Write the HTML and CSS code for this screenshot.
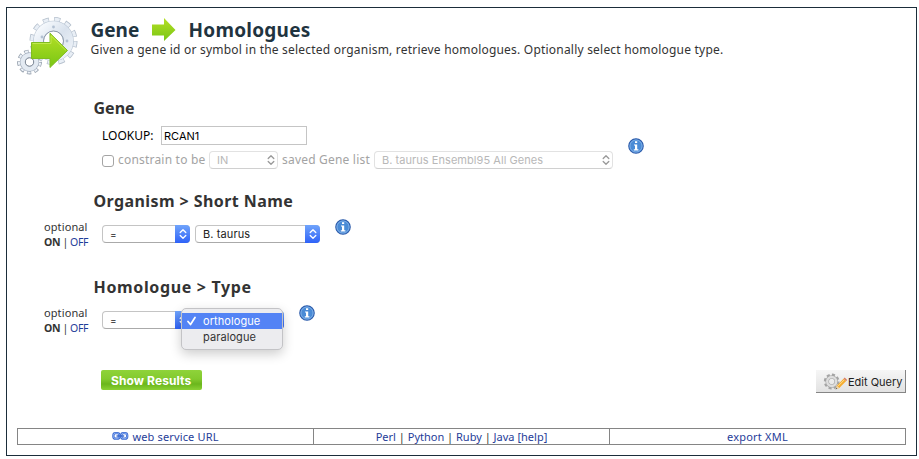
FILE: index.html
```
<!DOCTYPE html>
<html lang="en">
<head>
<meta charset="utf-8">
<title>Gene Homologues</title>
<link rel="stylesheet" href="styles.css">
</head>
<body>
<svg class="defs" width="0" height="0">
  <defs>
    <linearGradient id="green" x1="0" y1="0" x2="0" y2="1"><stop offset="0" stop-color="#b5df25"/><stop offset="1" stop-color="#78c614"/></linearGradient>
    <linearGradient id="steel" x1="0" y1="0" x2="1" y2="1"><stop offset="0" stop-color="#f8fbfe"/><stop offset=".5" stop-color="#d9e2ed"/><stop offset="1" stop-color="#eef3f9"/></linearGradient>
    <symbol id="info" viewBox="0 0 16 16">
      <circle cx="8" cy="8" r="7.2" fill="#4a8bd6" stroke="#2c5bab" stroke-width="1.2"/>
      <circle cx="8" cy="8" r="6.1" fill="none" stroke="#8dbaec" stroke-width=".8"/>
      <path d="M7 3.2h2.2v1.9H7zM6 6.5h3.2v4.8h1.2v1.2H5.8v-1.2H7V7.6H6z" fill="#fff"/>
    </symbol>
    <symbol id="chevrons" viewBox="0 0 8 12">
      <path d="M1.2 4.5 4 1.7l2.8 2.8M1.2 7.5 4 10.3l2.8-2.8" fill="none" stroke="currentColor" stroke-width="1.3" stroke-linecap="round" stroke-linejoin="round"/>
    </symbol>
  </defs>
</svg>
<main class="frame">
  <header class="header">
    <svg class="logo" width="62" height="60" viewBox="0 0 62 60">
      <g fill="none">
        <circle cx="36.500" cy="24" r="21.5" stroke="#b4bfcc" stroke-width="5" stroke-dasharray="6.1 5.16"/>
        <circle cx="36.500" cy="24" r="21.5" stroke="#e9eff6" stroke-width="3.4" stroke-dasharray="4.9 6.36" stroke-dashoffset="-.6"/>
        <circle cx="36.500" cy="24" r="15" stroke="#b9c5d3" stroke-width="10.600"/>
        <circle cx="36.500" cy="24" r="15" stroke="url(#steel)" stroke-width="9.400"/>
        <circle cx="36.500" cy="24" r="10" stroke="#8d9aaa" stroke-width="1"/>
        <circle cx="12.500" cy="45" r="10.7" stroke="#929daa" stroke-width="3.4" stroke-dasharray="4.3 3.17"/>
        <circle cx="12.500" cy="45" r="10.5" stroke="#edf2f8" stroke-width="2.2" stroke-dasharray="3.1 4.23" stroke-dashoffset="-.6"/>
        <circle cx="12.500" cy="45" r="6.8" stroke="#a5b0bf" stroke-width="5.8"/>
        <circle cx="12.500" cy="45" r="6.8" stroke="#e3eaf2" stroke-width="4.6"/>
        <circle cx="12.500" cy="45" r="4.2" stroke="#7f8996" stroke-width="1"/>
      </g>
      <g fill="#b3c1d3"><circle cx="36.500" cy="10" r="1.4"/><circle cx="50" cy="24" r="1.4"/><circle cx="25" cy="20" r="1.4"/></g>
      <path d="M14.500 25.500H33V16.200L50.500 33.500 33 50.500V41.500H14.500z" fill="url(#green)" stroke="#80bd20"/>
      <path d="M15.500 26.500H34V18.700L49 33.500" fill="none" stroke="#c8ec58" stroke-width=".8"/>
    </svg>
    <div class="heading">
      <h1 class="title"><span class="t-gene">Gene</span>
        <svg class="arrow" width="24" height="24" viewBox="0 0 24 24"><path d="M0 6.500H12V0L23.500 12 12 23V17.500H0z" fill="url(#green)"/></svg>
        <span class="t-homologues">Homologues</span></h1>
      <p class="description">Given a gene id or symbol in the selected organism, retrieve homologues. Optionally select homologue type.</p>
    </div>
  </header>

  <section class="block gene">
    <h2 class="s-gene">Gene</h2>
    <div class="gene-row">
      <div class="gene-fields">
        <div class="lookup"><span class="lookup-label">LOOKUP:</span><div class="input">RCAN1</div></div>
        <div class="constrain">
          <span class="checkbox"></span><span class="constrain-label">constrain to be</span>
          <div class="select disabled sel-in"><span>IN</span><i><svg width="8" height="12"><use href="#chevrons"/></svg></i></div>
          <span class="saved-label">saved Gene list</span>
          <div class="select disabled sel-list"><span>B. taurus Ensembl95 All Genes</span><i><svg width="8" height="12"><use href="#chevrons"/></svg></i></div>
        </div>
      </div>
      <svg class="info" width="16" height="16"><use href="#info"/></svg>
    </div>
  </section>

  <section class="block organism">
    <h2 class="s-organism">Organism &gt; Short Name</h2>
    <div class="constraint">
      <div class="optional"><div class="opt-text">optional</div><div class="toggle"><b>ON</b> | <a>OFF</a></div></div>
      <div class="select sel-op"><span class="eq">=</span><i><svg width="8" height="12"><use href="#chevrons"/></svg></i></div>
      <div class="select sel-value"><span>B. taurus</span><i><svg width="8" height="12"><use href="#chevrons"/></svg></i></div>
      <svg class="info" width="16" height="16"><use href="#info"/></svg>
    </div>
  </section>

  <section class="block homologue">
    <h2 class="s-homologue">Homologue &gt; Type</h2>
    <div class="constraint">
      <div class="optional"><div class="opt-text">optional</div><div class="toggle"><b>ON</b> | <a>OFF</a></div></div>
      <div class="select sel-op"><span class="eq">=</span><i><svg width="8" height="12"><use href="#chevrons"/></svg></i></div>
      <div class="select sel-type"><i></i>
        <div class="menu">
          <div class="option selected"><svg width="9" height="10" viewBox="0 0 9 10"><path d="M1 5.500 3.500 8.500 8 1.500" fill="none" stroke="#fff" stroke-width="1.700" stroke-linecap="round" stroke-linejoin="round"/></svg><span class="o-ortho">orthologue</span></div>
          <div class="option"><span class="o-para">paralogue</span></div>
        </div>
      </div>
      <svg class="info" width="16" height="16"><use href="#info"/></svg>
    </div>
  </section>

  <div class="actions">
    <div class="show"><span>Show Results</span></div>
    <div class="edit">
      <svg width="25" height="19" viewBox="0 0 26 20">
        <g fill="none"><circle cx="9" cy="10" r="7" stroke="#a4a4a4" stroke-width="2.600" stroke-dasharray="3.200 2.298"/><circle cx="9" cy="10" r="4.700" stroke="#a6a6a6" stroke-width="3.800"/><circle cx="9" cy="10" r="4.700" stroke="#dedede" stroke-width="2.500"/></g>
        <path d="M13.300 18 14.500 14.200 21.500 7 24.300 9.500 17 16.800z" fill="#f5ac31"/><path d="M15.500 15 22.500 8" stroke="#ffe08a"/><path d="M21.500 7 22.700 5.900 25.300 8.400 24.300 9.500z" fill="#d87b62"/><path d="M13.300 18 14.500 14.200 17 16.800z" fill="#ead6b5"/><path d="M13 18.400 13.800 16.600 14.800 17.700z" fill="#555"/>
      </svg>
      <span>Edit Query</span>
    </div>
  </div>

  <footer class="links">
    <div><svg width="17" height="8" viewBox="0 0 17 8"><g fill="none" stroke="#3868d0" stroke-width="2.300"><rect x="1.400" y="1.200" width="6" height="5.400" rx="2.200"/><rect x="9.200" y="1.200" width="6" height="5.400" rx="2.200"/></g><g fill="none" stroke="#a6c5ff" stroke-width=".7"><rect x="1.400" y="1.200" width="6" height="5.400" rx="2.200"/><rect x="9.200" y="1.200" width="6" height="5.400" rx="2.200"/></g><path d="M4.500 4h7.700" stroke="#3868d0" stroke-width="1.500"/></svg><a class="l-web">web service URL</a></div>
    <div><span class="l-langs"><a>Perl</a> | <a>Python</a> | <a>Ruby</a> | <a>Java</a> <a>[help]</a></span></div>
    <div><a class="l-xml">export XML</a></div>
  </footer>
</main>
</body>
</html>
```
FILE: styles.css
```
* { box-sizing: border-box; }
body { margin: 0; padding: 7px 0 0 6px; background: #fff; color: #333; font: 12px/16px "Noto Sans", sans-serif; white-space: nowrap; }
.defs { display: block; height: 0; }
svg { display: block; flex: none; }
h1, h2, p { margin: 0; }
a { color: #1f3d99; }
.frame { width: 911px; height: 449px; border: 1px solid #1b2d3a; padding: 0 10px; }

.header { display: flex; height: 85px; padding-top: 9px; }
.logo { flex: none; }
.heading { margin-left: 11.5px; }
.title { display: flex; align-items: center; height: 24px; color: #1f343f; font-size: 19px; line-height: 24px; margin-top: 1px; }
.arrow { margin: 0 13px 0 12px; }
.t-gene { width: 49px; }
.t-homologues { letter-spacing: .25px; }
.description { line-height: 16px; font-size: 12px; letter-spacing: .21px; }

.block { height: 86px; }
.gene { height: 93px; }
.block h2 { height: 30px; line-height: 30px; padding-left: 76.5px; font-size: 16px; }
.block .s-organism { letter-spacing: .42px; }
.block .s-homologue { letter-spacing: .65px; }

.gene-row { display: flex; padding-left: 85px; }
.gene-fields { width: 511px; padding-top: 3px; }
.gene-row .info { margin: 14.5px 0 0 15px; }
.lookup { display: flex; align-items: center; height: 19px; color: #000; }
.lookup-label { width: 59px; }
.input { width: 146px; height: 19px; border: 1px solid #c5c5c5; padding-left: 2px; font: 11px/18px Inter, sans-serif; }
.constrain { display: flex; align-items: center; height: 18px; margin-top: 6px; color: #a3a3a3; }
.checkbox { width: 12px; height: 12px; margin-right: 4px; border: 1px solid #a5a5a5; border-radius: 3px; position: relative; top: 1px; }
.constrain-label { width: 91px; letter-spacing: .2px; }
.saved-label { width: 92px; margin-left: 4px; letter-spacing: .2px; }

.select { position: relative; display: flex; justify-content: space-between; flex: none; height: 18px; border: 1px solid #c4c4c4; border-bottom-color: #aaa; border-radius: 4px; background: #fff; color: #222; padding-left: 7px; font: 11px/17px Inter, sans-serif; }
.select i { display: flex; align-items: center; justify-content: center; width: 15px; height: 18px; margin: -1px; border-radius: 0 4px 4px 0; background: linear-gradient(#70a4fb, #2e62f8); color: #fff; }
.disabled { color: #b8b8b8; border-color: #e2e2e2; border-bottom-color: #d0d0d0; }
.disabled i { background: none; color: #999; }
.sel-in { width: 69px; }
.sel-list { width: 239px; letter-spacing: .05px; }

.constraint { display: flex; padding-left: 27px; }
.optional { width: 58px; font-size: 11px; line-height: 15px; padding-top: 3px; }
.opt-text { letter-spacing: .1px; }
.toggle { font-size: 10.5px; line-height: 16px; letter-spacing: -.4px; }
.constraint .select { margin-top: 9px; }
.constraint .info { margin: 2.5px 0 0 15px; }
.sel-op { width: 88px; margin-right: 5px; }
.eq { font-size: 10px; }
.sel-value { width: 125px; letter-spacing: .1px; }
.sel-type { width: 89px; justify-content: flex-end; }
.menu { position: absolute; left: -15px; top: -4px; width: 102px; height: 42px; padding: 4px 0; border: 1px solid #c3c3c6; border-radius: 5px; background: #ececef; box-shadow: 0 4px 12px rgba(0,0,0,.2); color: #333; letter-spacing: .08px; }
.option { display: flex; align-items: center; height: 16px; padding-left: 21px; line-height: 16px; }
.option.selected { background: #5383f5; color: #fff; padding-left: 5px; }
.option svg { margin-right: 7px; }

.actions { display: flex; justify-content: space-between; align-items: flex-start; height: 70px; padding: 12px 0 0 84px; }
.show { width: 101px; height: 20px; padding-left: 10px; border-radius: 2px; background: linear-gradient(#8fd33a, #83ca2e 45%, #6bb61c 70%, #8ad134); color: #fff; font: bold 12px/21px Inter, sans-serif; letter-spacing: .1px; }
.edit { display: flex; align-items: center; width: 90px; height: 23px; padding: 1px 0 0 7px; background: linear-gradient(#f6f6f6, #e2e2e2); border-right: 1px solid #858585; border-bottom: 1px solid #858585; color: #222; font: 11px/20px Inter, sans-serif; }

.links { display: flex; height: 17px; border: 1px solid #858585; font-size: 11px; line-height: 17px; color: #333; }
.links div { flex: 1; display: flex; align-items: center; justify-content: center; }
.links div + div { border-left: 1px solid #858585; }
.links svg { margin: 0 3px 1px 0; }
.l-web { letter-spacing: .15px; }
.l-xml { letter-spacing: .2px; }
```
